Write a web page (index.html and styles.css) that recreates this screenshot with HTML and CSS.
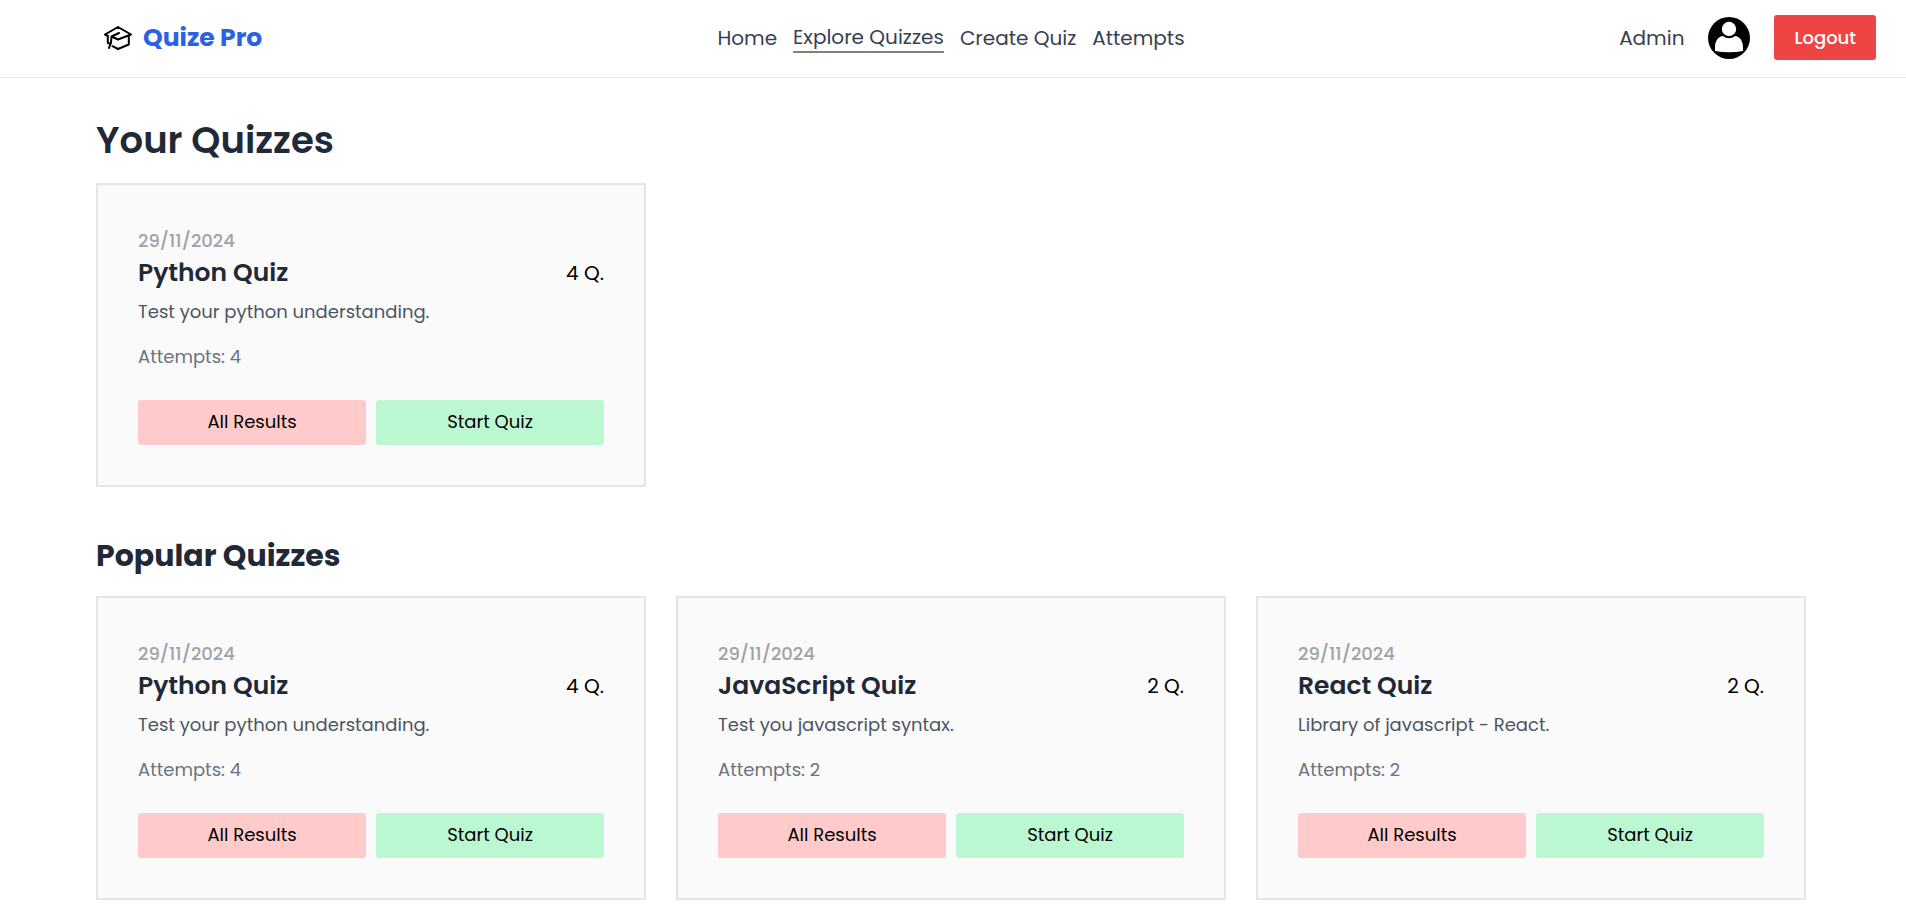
FILE: index.html
```html
<!DOCTYPE html>
<html lang="en">
<head>
<meta charset="utf-8">
<meta name="viewport" content="width=device-width, initial-scale=1">
<title>Quize Pro</title>
<link rel="stylesheet" href="styles.css">
</head>
<body>
<header class="header">
  <a class="brand" href="#">
    <svg class="brand-icon" viewBox="0 0 28 24" fill="none" stroke="currentColor" stroke-width="2" stroke-linejoin="round" stroke-linecap="round" aria-hidden="true">
      <path d="M8.500 11 14 13.500 27 8.500 14 1 1 8.500l3 1.500M15 7 7.500 10.500 7 16.500 5 22M3.800 10v7l3 .8M24.800 10v8.500L14 23 8.500 20.200"/>
    </svg>
    <span class="brand-name">Quize Pro</span>
  </a>
  <nav class="nav">
    <a class="nav-link" href="#">Home</a>
    <a class="nav-link active" href="#" aria-current="page">Explore Quizzes</a>
    <a class="nav-link" href="#">Create Quiz</a>
    <a class="nav-link" href="#">Attempts</a>
  </nav>
  <div class="account">
    <span class="user-name">Admin</span>
    <svg class="avatar" viewBox="0 0 42 42" role="img" aria-label="Profile">
      <circle cx="21" cy="21" r="21" fill="#000"/>
      <circle cx="21" cy="12" r="7.200" fill="#fff"/>
      <path d="M7 34v-4c0-6 3.500-11 8-11 2 1.600 4 2.200 6 2.200s4-.6 6-2.200c4.500 0 8 5 8 11v4q-14 2.400-28 0z" fill="#fff"/>
    </svg>
    <button class="logout" type="button">Logout</button>
  </div>
</header>
<main class="main">
  <section class="section">
    <h1 class="page-title">Your Quizzes</h1>
    <div class="grid">
      <article class="card">
        <p class="date">29/11/2024</p>
        <div class="card-head"><h3 class="card-title">Python Quiz</h3><span class="count">4 Q.</span></div>
        <p class="description">Test your python understanding.</p>
        <p class="attempts">Attempts: 4</p>
        <div class="actions"><button class="btn results" type="button">All Results</button><button class="btn start" type="button">Start Quiz</button></div>
      </article>
    </div>
  </section>
  <section class="section">
    <h2 class="section-title">Popular Quizzes</h2>
    <div class="grid">
      <article class="card">
        <p class="date">29/11/2024</p>
        <div class="card-head"><h3 class="card-title">Python Quiz</h3><span class="count">4 Q.</span></div>
        <p class="description">Test your python understanding.</p>
        <p class="attempts">Attempts: 4</p>
        <div class="actions"><button class="btn results" type="button">All Results</button><button class="btn start" type="button">Start Quiz</button></div>
      </article>
      <article class="card">
        <p class="date">29/11/2024</p>
        <div class="card-head"><h3 class="card-title">JavaScript Quiz</h3><span class="count">2 Q.</span></div>
        <p class="description">Test you javascript syntax.</p>
        <p class="attempts">Attempts: 2</p>
        <div class="actions"><button class="btn results" type="button">All Results</button><button class="btn start" type="button">Start Quiz</button></div>
      </article>
      <article class="card">
        <p class="date">29/11/2024</p>
        <div class="card-head"><h3 class="card-title">React Quiz</h3><span class="count">2 Q.</span></div>
        <p class="description">Library of javascript - React.</p>
        <p class="attempts">Attempts: 2</p>
        <div class="actions"><button class="btn results" type="button">All Results</button><button class="btn start" type="button">Start Quiz</button></div>
      </article>
    </div>
  </section>
</main>
</body>
</html>
```
FILE: styles.css
```css
*, *::before, *::after { box-sizing: border-box; }
body {
  margin: 0;
  background: #fff;
  color: #000;
  font-family: Poppins, Inter, sans-serif;
  font-size: 18px;
  line-height: 28px;
}
h1, h2, h3, p { margin: 0; }
a { color: inherit; text-decoration: none; }
button { border: 0; font: inherit; cursor: pointer; }

.header {
  display: grid;
  grid-template-columns: 1fr auto 1fr;
  align-items: center;
  padding: 15px 30px 17px 104px;
  border-bottom: 1px solid #e5e7eb;
}
.brand { display: flex; align-items: center; gap: 11px; }
.brand-icon { width: 28px; height: 24px; color: #000; }
.brand-name { color: #2b62e3; font-size: 25px; font-weight: 700; line-height: 32px; }
.nav { display: flex; align-items: center; gap: 16px; margin-right: 78px; color: #374151; font-size: 20px; }
.nav-link.active { border-bottom: 2px solid #808080; }
.account { display: flex; align-items: center; justify-content: flex-end; gap: 24px; }
.user-name { color: #374151; font-size: 20px; }
.avatar { width: 42px; height: 42px; }
.logout {
  padding: 8px 20px;
  border-radius: 3px;
  background: #ef4444;
  color: #fff;
  font-weight: 500;
  line-height: 29px;
}

.main { padding: 38px 100px 20px 96px; }
.section + .section { margin-top: 48px; }
.page-title { margin-bottom: 19px; color: #1f2937; font-size: 37px; font-weight: 600; line-height: 48px; }
.section-title { margin-bottom: 19px; color: #1f2937; font-size: 30px; font-weight: 700; line-height: 42px; }
.grid { display: grid; grid-template-columns: repeat(3, 1fr); gap: 30px; }
.card { padding: 40px; border: 2px solid #e5e5e5; background: #fafafa; }
.date { color: #a1a1aa; font-weight: 500; line-height: 31px; }
.card-head { display: flex; align-items: center; justify-content: space-between; }
.card-title { color: #1f2937; font-size: 25px; font-weight: 600; line-height: 34px; }
.count { font-size: 20px; }
.description { margin-top: 8px; color: #4b5563; }
.attempts { margin-top: 17px; color: #6b7280; }
.actions { display: grid; grid-template-columns: 1fr 1fr; gap: 10px; margin-top: 29px; }
.btn { padding: 7px 16px 9px; border-radius: 3px; color: #000; line-height: 29px; }
.results { background: #fecaca; }
.start { background: #bbf7d0; }
```
